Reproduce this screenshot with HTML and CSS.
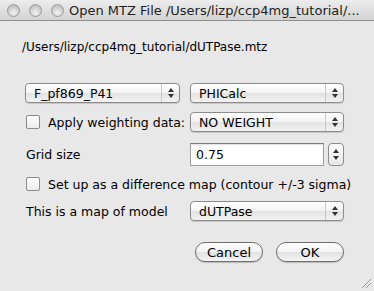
FILE: index.html
```html
<!DOCTYPE html>
<html lang="en">
<head>
<meta charset="UTF-8">
<title>Open MTZ File</title>
<link rel="stylesheet" href="styles.css">
</head>
<body>

<div class="titlebar">
  <span class="light"></span>
  <span class="light"></span>
  <span class="light"></span>
  <span class="title">Open MTZ File /Users/lizp/ccp4mg_tutorial/...</span>
</div>

<div class="content">
  <div class="path">/Users/lizp/ccp4mg_tutorial/dUTPase.mtz</div>

  <div class="row row-cols">
    <div class="popup"><span>F_pf869_P41</span><i class="arrows"></i></div>
    <div class="popup"><span>PHICalc</span><i class="arrows"></i></div>
  </div>

  <div class="row row-weight">
    <label class="check"><span class="box"></span>Apply weighting data:</label>
    <div class="popup"><span>NO WEIGHT</span><i class="arrows"></i></div>
  </div>

  <div class="row row-grid">
    <div class="label">Grid size</div>
    <div class="spin">
      <div class="field">0.75</div>
      <div class="stepper"><i class="arrows"></i></div>
    </div>
  </div>

  <div class="row row-diff">
    <label class="check"><span class="box"></span>Set up as a difference map (contour +/-3 sigma)</label>
  </div>

  <div class="row row-model">
    <div class="label">This is a map of model</div>
    <div class="popup"><span>dUTPase</span><i class="arrows"></i></div>
  </div>

  <div class="buttons">
    <button class="btn">Cancel</button>
    <button class="btn">OK</button>
  </div>
</div>

<div class="grip"></div>

</body>
</html>
```

FILE: styles.css
```css
body {
  margin: 0;
  width: 374px;
  height: 291px;
  background: #e8e8e8;
  font-family: 'DejaVu Sans', sans-serif;
  font-size: 12.5px;
  color: #000;
  overflow: hidden;
  position: relative;
}

/* title bar */
.titlebar {
  height: 20px;
  display: flex;
  align-items: center;
  padding-left: 7px;
  background: linear-gradient(#ededed, #d3d3d3);
  border-bottom: 1px solid #8e8e8e;
}

.light {
  width: 11px;
  height: 11px;
  border-radius: 50%;
  border: 1px solid #9a9a9a;
  background: radial-gradient(circle at 50% 70%, #f4f4f4, #c4c4c4 70%);
  margin-right: 9px;
}

.title {
  margin-left: -4px;
  font-size: 13px;
  color: #222;
  white-space: nowrap;
}

/* body */
.content {
  padding: 19px 0 0 25px;
}

.path {
  margin-left: -3px;
  height: 15px;
  line-height: 15px;
  font-size: 12px;
}

.row {
  display: grid;
  grid-template-columns: 155px 154px;
  column-gap: 10px;
  align-items: center;
}

.row-cols { margin-top: 28px; height: 20px; }
.row-weight { margin-top: 9px; height: 20px; }
.row-grid { margin-top: 11px; height: 23px; }
.row-diff { margin-top: 8px; height: 20px; grid-template-columns: 1fr; }
.row-model { margin-top: 7px; height: 20px; }

.label {
  padding-left: 1px;
}

.popup {
  height: 18px;
  display: flex;
  align-items: center;
  border: 1px solid #8c8c8c;
  border-radius: 4px;
  background: linear-gradient(#ffffff, #f3f3f3 50%, #e3e3e3 51%, #f2f2f2);
  box-shadow: 0 1px 1px rgba(0, 0, 0, 0.15);
}

.popup span {
  flex: 1;
  padding-left: 8px;
}

.popup .arrows {
  width: 17px;
  height: 18px;
  border-left: 1px solid #c8c8c8;
}

.arrows {
  position: relative;
  display: block;
}

.arrows::before,
.arrows::after {
  content: '';
  position: absolute;
  left: 50%;
  margin-left: -3px;
  border-left: 3px solid transparent;
  border-right: 3px solid transparent;
}

.arrows::before {
  top: 4px;
  border-bottom: 4px solid #333;
}

.arrows::after {
  bottom: 4px;
  border-top: 4px solid #333;
}

.check {
  display: flex;
  align-items: center;
  white-space: nowrap;
  min-width: 0;
}

.box {
  flex-shrink: 0;
  width: 12px;
  height: 12px;
  margin: 0 8px 0 1px;
  border: 1px solid #8a8a8a;
  border-radius: 2px;
  background: linear-gradient(#ffffff, #ececec);
}

.spin {
  display: flex;
  align-items: center;
}

.field {
  width: 127px;
  height: 21px;
  line-height: 22px;
  padding-left: 5px;
  background: #fff;
  border: 1px solid #a0a0a0;
  border-top-color: #7c7c7c;
  box-shadow: inset 0 1px 1px rgba(0, 0, 0, 0.12);
}

.stepper {
  width: 14px;
  height: 21px;
  margin-left: 4px;
  border: 1px solid #8c8c8c;
  border-radius: 4px;
  background: linear-gradient(#ffffff, #e8e8e8);
}

.stepper .arrows {
  height: 21px;
}

.stepper .arrows::before { top: 5px; }
.stepper .arrows::after { bottom: 5px; }

.buttons {
  display: flex;
  gap: 13px;
  margin: 21px 0 0 170px;
}

.btn {
  width: 68px;
  height: 20px;
  padding: 0;
  font-family: 'DejaVu Sans', sans-serif;
  font-size: 13px;
  color: #000;
  border: 1px solid #6f6f6f;
  border-radius: 10px;
  background: linear-gradient(#ffffff, #f2f2f2 50%, #e2e2e2 51%, #f4f4f4);
  box-shadow: 0 1px 1px rgba(0, 0, 0, 0.2);
}

.grip {
  position: absolute;
  right: 3px;
  bottom: 3px;
  width: 9px;
  height: 9px;
  background: linear-gradient(135deg, transparent 45%, #999 45%, #999 52%, transparent 52%, transparent 70%, #999 70%, #999 77%, transparent 77%);
}
```
